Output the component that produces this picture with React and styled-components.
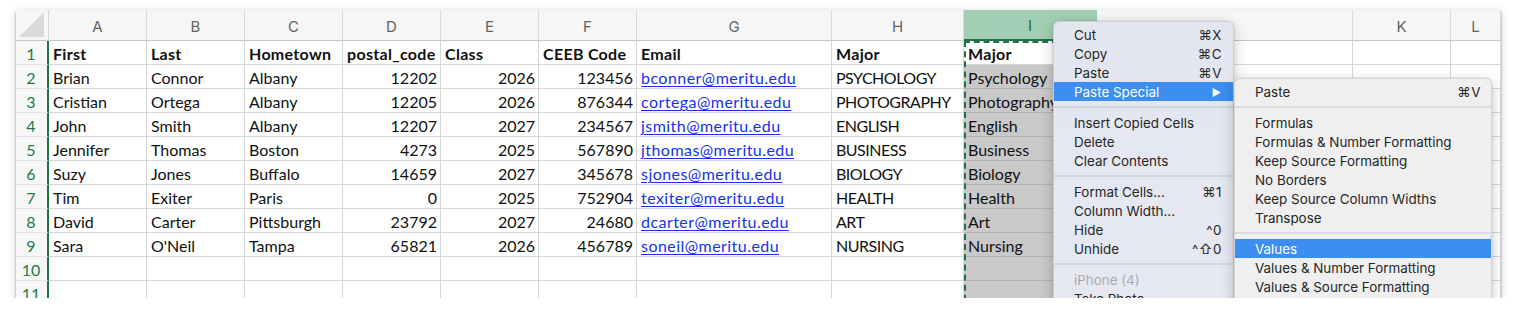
import React from 'react'
import styled, { createGlobalStyle } from 'styled-components'

const GlobalStyle = createGlobalStyle`
  html, body {
    margin: 0;
    background: #ffffff;
    overflow: hidden;
  }
`

const COLS = [
  { key: 'A', w: 98 },
  { key: 'B', w: 98 },
  { key: 'C', w: 98 },
  { key: 'D', w: 98 },
  { key: 'E', w: 98 },
  { key: 'F', w: 98 },
  { key: 'G', w: 195 },
  { key: 'H', w: 132 },
  { key: 'I', w: 133 },
  { key: 'J', w: 256 },
  { key: 'K', w: 98 },
  { key: 'L', w: 50 },
]

// which columns hold numbers (right aligned)
const NUMERIC = [3, 4, 5]
const SELECTED = 8

const DATA = [
  ['First', 'Last', 'Hometown', 'postal_code', 'Class', 'CEEB Code', 'Email', 'Major', 'Major'],
  ['Brian', 'Connor', 'Albany', '12202', '2026', '123456', 'bconner@meritu.edu', 'PSYCHOLOGY', 'Psychology'],
  ['Cristian', 'Ortega', 'Albany', '12205', '2026', '876344', 'cortega@meritu.edu', 'PHOTOGRAPHY', 'Photography'],
  ['John', 'Smith', 'Albany', '12207', '2027', '234567', 'jsmith@meritu.edu', 'ENGLISH', 'English'],
  ['Jennifer', 'Thomas', 'Boston', '4273', '2025', '567890', 'jthomas@meritu.edu', 'BUSINESS', 'Business'],
  ['Suzy', 'Jones', 'Buffalo', '14659', '2027', '345678', 'sjones@meritu.edu', 'BIOLOGY', 'Biology'],
  ['Tim', 'Exiter', 'Paris', '0', '2025', '752904', 'texiter@meritu.edu', 'HEALTH', 'Health'],
  ['David', 'Carter', 'Pittsburgh', '23792', '2027', '24680', 'dcarter@meritu.edu', 'ART', 'Art'],
  ['Sara', "O'Neil", 'Tampa', '65821', '2026', '456789', 'soneil@meritu.edu', 'NURSING', 'Nursing'],
  [],
  [],
]

const MENU = [
  { label: 'Cut', key: '⌘X' },
  { label: 'Copy', key: '⌘C' },
  { label: 'Paste', key: '⌘V' },
  { label: 'Paste Special', arrow: true, active: true },
  { sep: true },
  { label: 'Insert Copied Cells' },
  { label: 'Delete' },
  { label: 'Clear Contents' },
  { sep: true },
  { label: 'Format Cells...', key: '⌘1' },
  { label: 'Column Width...' },
  { label: 'Hide', key: '^0' },
  { label: 'Unhide', key: '^⇧0' },
  { sep: true },
  { label: 'iPhone (4)', disabled: true },
  { label: 'Take Photo' },
]

const SUBMENU = [
  { label: 'Paste', key: '⌘V' },
  { sep: true },
  { label: 'Formulas' },
  { label: 'Formulas & Number Formatting' },
  { label: 'Keep Source Formatting' },
  { label: 'No Borders' },
  { label: 'Keep Source Column Widths' },
  { label: 'Transpose' },
  { sep: true },
  { label: 'Values', active: true },
  { label: 'Values & Number Formatting' },
  { label: 'Values & Source Formatting' },
]

const Page = styled.div`
  padding: 10px 0 0 16px;
`

const Window = styled.div`
  position: relative;
  width: 1485px;
  height: 288px;
  overflow: hidden;
  background: #fff;
  box-shadow: 0 1px 2px rgba(0, 0, 0, 0.35), 0 2px 8px rgba(0, 0, 0, 0.18);
`

const Grid = styled.div`
  display: grid;
  grid-template-columns: 33px ${COLS.map(c => c.w + 'px').join(' ')};
  grid-template-rows: 31px repeat(11, 24px);
`

const Corner = styled.div`
  background: #f6f6f6;
  border-right: 1px solid #d6d6d6;
  border-bottom: 1px solid #c6c6c6;
  display: flex;
  align-items: flex-end;
  justify-content: flex-end;
  padding: 0 4px 3px 0;
`

const ColHead = styled.div`
  background: ${p => (p.$sel ? '#a2cfb3' : '#f6f6f6')};
  border-right: 1px solid ${p => (p.$sel ? '#a2cfb3' : '#dadada')};
  border-bottom: ${p => (p.$sel ? '2px solid #217346' : '1px solid #c6c6c6')};
  color: ${p => (p.$sel ? '#1c6b3c' : '#646464')};
  font-family: Inter, 'Liberation Sans', sans-serif;
  font-size: 15px;
  display: flex;
  align-items: center;
  justify-content: center;
  padding-top: 2px;
`

const RowHead = styled.div`
  background: #f7f7f7;
  border-right: 2px solid #217346;
  border-bottom: 1px solid #e2e2e2;
  color: #237a49;
  font-family: Lato, 'Liberation Sans', sans-serif;
  font-size: 16px;
  display: flex;
  align-items: center;
  justify-content: center;
  padding: 1px 1px 0 0;
`

const Cell = styled.div`
  background: ${p => (p.$sel ? '#c9c9c9' : '#fff')};
  border-right: 1px solid ${p => (p.$sel ? '#bdbdbd' : '#d6d6d6')};
  border-bottom: 1px solid ${p => (p.$sel ? '#b3b3b3' : '#d6d6d6')};
  font-family: Lato, 'Liberation Sans', sans-serif;
  font-size: 16px;
  font-weight: ${p => (p.$bold ? 700 : 400)};
  letter-spacing: ${p => (p.$bold ? '0.3px' : p.$link ? '0.45px' : p.$caps ? '-0.5px' : '0')};
  color: ${p => (p.$link ? '#1531f5' : '#111')};
  text-decoration: ${p => (p.$link ? 'underline' : 'none')};
  text-underline-offset: 2px;
  text-decoration-thickness: 1px;
  display: flex;
  align-items: center;
  justify-content: ${p => (p.$right ? 'flex-end' : 'flex-start')};
  padding: 2px 3px 0 4px;
  white-space: nowrap;
  overflow: hidden;
`

const Marquee = styled.div`
  position: absolute;
  left: 948px;
  top: 31px;
  width: 133px;
  height: 270px;
  box-sizing: border-box;
  border: 2px dashed #217346;
  pointer-events: none;
`

const Menu = styled.div`
  position: absolute;
  left: ${p => p.$x}px;
  top: ${p => p.$y}px;
  width: ${p => p.$w}px;
  box-sizing: border-box;
  padding: 3px 0 6px;
  border-radius: 6px;
  background: ${p => p.$bg};
  border: 1px solid rgba(0, 0, 0, 0.1);
  box-shadow: 0 4px 14px rgba(0, 0, 0, 0.22), 0 0 2px rgba(0, 0, 0, 0.15);
  font-family: Inter, 'Liberation Sans', sans-serif;
  font-size: 13.4px;
`

const Item = styled.div`
  height: 19px;
  display: flex;
  align-items: center;
  justify-content: space-between;
  padding: 0 ${p => p.$pr}px 0 20px;
  background: ${p => (p.$active ? '#3c8ef0' : 'transparent')};
  color: ${p => (p.$active ? '#fff' : p.$disabled ? '#a9abb1' : '#262626')};
`

const Shortcut = styled.span`
  letter-spacing: 0.5px;
`

const Arrow = styled.span`
  font-size: 10px;
  padding-right: 1px;
`

const Separator = styled.div`
  height: 12px;
  display: flex;
  align-items: center;
  &::after {
    content: '';
    flex: 1;
    height: 2px;
    background: rgba(0, 0, 0, 0.08);
  }
`

function MenuList({ items, pr }) {
  return items.map((it, i) =>
    it.sep ? (
      <Separator key={i} />
    ) : (
      <Item key={i} $active={it.active} $disabled={it.disabled} $pr={pr}>
        <span>{it.label}</span>
        {it.key && <Shortcut>{it.key}</Shortcut>}
        {it.arrow && <Arrow>▶</Arrow>}
      </Item>
    )
  )
}

export default function App() {
  return (
    <>
      <GlobalStyle />
      <Page>
        <Window>
          <Grid>
            <Corner>
              <svg width="25" height="25" viewBox="0 0 24 24">
                <polygon points="24,0 24,24 0,24" fill="#d9d9d9" />
              </svg>
            </Corner>
            {COLS.map((c, ci) => (
              <ColHead key={c.key} $sel={ci === SELECTED}>
                {c.key}
              </ColHead>
            ))}
            {DATA.map((row, ri) => (
              <React.Fragment key={ri}>
                <RowHead>{ri + 1}</RowHead>
                {COLS.map((c, ci) => {
                  const v = row[ci] || ''
                  return (
                    <Cell
                      key={c.key}
                      $sel={ci === SELECTED && ri > 0}
                      $bold={ri === 0}
                      $right={ri > 0 && NUMERIC.includes(ci)}
                      $link={ri > 0 && ci === 6}
                      $caps={ri > 0 && ci === 7}
                    >
                      {v}
                    </Cell>
                  )
                })}
              </React.Fragment>
            ))}
          </Grid>
          <Marquee />
          <Menu $x={1037} $y={11} $w={181} $bg="linear-gradient(180deg, #e3e6f1, #e6e8f1)">
            <MenuList items={MENU} pr={11} />
          </Menu>
          <Menu $x={1218} $y={68} $w={258} $bg="#efefef">
            <MenuList items={SUBMENU} pr={10} />
          </Menu>
        </Window>
      </Page>
    </>
  )
}
